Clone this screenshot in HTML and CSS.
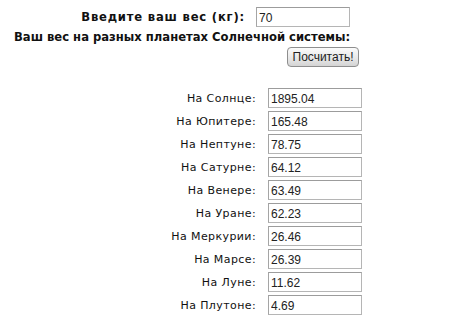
FILE: index.html
```html
<!DOCTYPE html>
<html lang="ru">
<head>
<meta charset="utf-8">
<title>Вес на планетах</title>
<link rel="stylesheet" href="styles.css">
</head>
<body>
<div class="form">
  <div class="weight-row">
    <label class="weight-label" for="w">Введите ваш вес (кг):</label>
    <input class="field weight-field" id="w" type="text" value="70">
  </div>
  <div class="heading">Ваш вес на разных планетах Солнечной системы:</div>
  <div class="btn-row"><button class="calc" type="button">Посчитать!</button></div>
  <div class="results">
    <div class="row"><span class="name">На Солнце:</span><input class="field" type="text" value="1895.04"></div>
    <div class="row"><span class="name">На Юпитере:</span><input class="field" type="text" value="165.48"></div>
    <div class="row"><span class="name">На Нептуне:</span><input class="field" type="text" value="78.75"></div>
    <div class="row"><span class="name">На Сатурне:</span><input class="field" type="text" value="64.12"></div>
    <div class="row"><span class="name">На Венере:</span><input class="field" type="text" value="63.49"></div>
    <div class="row"><span class="name">На Уране:</span><input class="field" type="text" value="62.23"></div>
    <div class="row"><span class="name">На Меркурии:</span><input class="field" type="text" value="26.46"></div>
    <div class="row"><span class="name">На Марсе:</span><input class="field" type="text" value="26.39"></div>
    <div class="row"><span class="name">На Луне:</span><input class="field" type="text" value="11.62"></div>
    <div class="row"><span class="name">На Плутоне:</span><input class="field" type="text" value="4.69"></div>
  </div>
</div>
</body>
</html>
```

FILE: styles.css
```css
html, body {
  margin: 0;
  padding: 0;
  background: #ffffff;
}
body {
  font-family: "DejaVu Sans", Verdana, sans-serif;
  color: #111;
}
.form {
  padding: 7px 0 0 14px;
  width: 348px;
}
.weight-row {
  display: flex;
  align-items: center;
  height: 20px;
}
.weight-label {
  width: 231px;
  text-align: right;
  font-weight: bold;
  font-size: 11.6px;
  letter-spacing: 0.8px;
  margin-right: 11px;
}
.field {
  box-sizing: border-box;
  width: 94px;
  height: 20px;
  border: 1px solid #b5b5b5;
  border-top-color: #9c9c9c;
  border-left-color: #a5a5a5;
  padding: 1px 2px 0;
  margin: 0;
  font-family: "Liberation Sans", Arial, sans-serif;
  font-size: 12px;
  color: #222;
  background: #fff;
  outline: none;
}
.heading {
  margin-top: 3px;
  font-weight: bold;
  font-size: 11.6px;
  line-height: 15px;
  white-space: nowrap;
}
.btn-row {
  margin-top: 1px;
  padding-left: 273px;
  height: 20px;
}
.calc {
  box-sizing: border-box;
  width: 72px;
  height: 20px;
  padding: 0;
  border: 1px solid #8e8e8e;
  border-radius: 4px;
  background: linear-gradient(#fbfbfb, #e6e6e6 60%, #d4d4d4);
  font-family: "Liberation Sans", Arial, sans-serif;
  font-size: 12px;
  color: #222;
}
.results {
  margin-top: 22px;
  display: flex;
  flex-direction: column;
  gap: 3px;
}
.row {
  display: flex;
  align-items: center;
  height: 20px;
}
.name {
  width: 243px;
  text-align: right;
  margin-right: 12px;
  font-size: 11px;
  letter-spacing: 0.4px;
}
```
